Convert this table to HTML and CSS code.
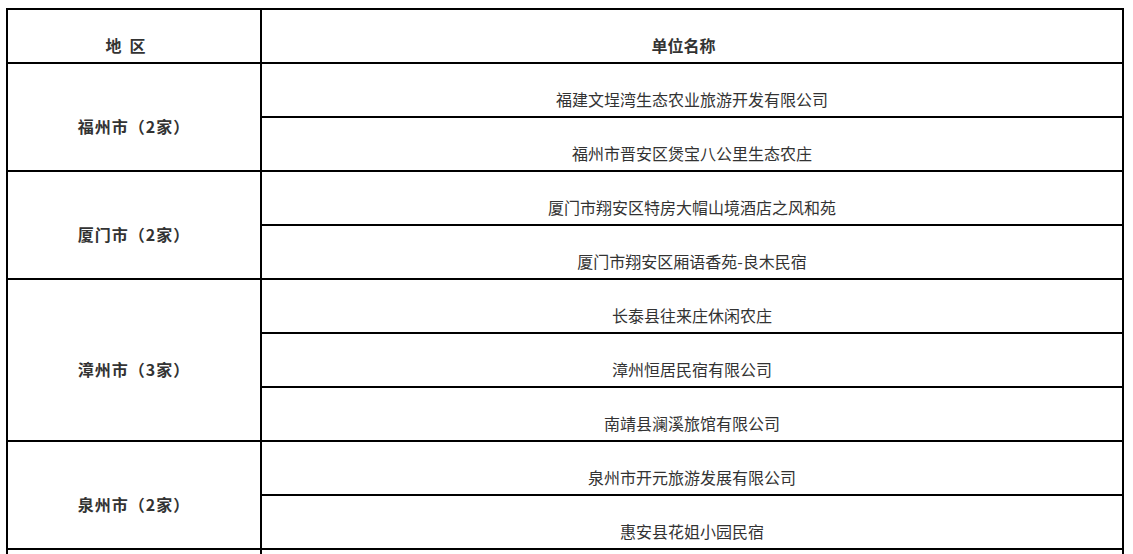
FILE: index.html
```html
<!DOCTYPE html>
<html lang="zh-CN">
<head>
<meta charset="utf-8">
<title>单位名称</title>
<link rel="stylesheet" href="styles.css">
</head>
<body>
<table class="list">
  <colgroup>
    <col class="col-region">
    <col class="col-name">
  </colgroup>
  <thead>
    <tr>
      <th class="head-region">地&ensp;区</th>
      <th class="head-name">单位名称</th>
    </tr>
  </thead>
  <tbody>
    <tr>
      <td class="region" rowspan="2">福州市（2家）</td>
      <td class="name">福建文埕湾生态农业旅游开发有限公司</td>
    </tr>
    <tr>
      <td class="name">福州市晋安区煲宝八公里生态农庄</td>
    </tr>
    <tr>
      <td class="region" rowspan="2">厦门市（2家）</td>
      <td class="name">厦门市翔安区特房大帽山境酒店之风和苑</td>
    </tr>
    <tr>
      <td class="name">厦门市翔安区厢语香苑-良木民宿</td>
    </tr>
    <tr>
      <td class="region" rowspan="3">漳州市（3家）</td>
      <td class="name">长泰县往来庄休闲农庄</td>
    </tr>
    <tr>
      <td class="name">漳州恒居民宿有限公司</td>
    </tr>
    <tr>
      <td class="name">南靖县澜溪旅馆有限公司</td>
    </tr>
    <tr>
      <td class="region" rowspan="2">泉州市（2家）</td>
      <td class="name">泉州市开元旅游发展有限公司</td>
    </tr>
    <tr>
      <td class="name">惠安县花姐小园民宿</td>
    </tr>
    <tr>
      <td class="region"></td>
      <td class="name"></td>
    </tr>
  </tbody>
</table>
</body>
</html>
```
FILE: styles.css
```css
html, body {
  margin: 0;
  padding: 0;
  background: #fff;
}

body {
  padding: 8px 0 0 6px;
  font-family: "Noto Sans CJK SC", "Noto Sans", sans-serif;
  font-size: 16px;
  color: #333;
}

.list {
  border-collapse: separate;
  border-spacing: 0;
  width: 1118px;
  table-layout: fixed;
  border-top: 2px solid #000;
  border-left: 2px solid #000;
}

.col-region {
  width: 254px;
}

.list tr {
  height: 54px;
}

.list th,
.list td {
  border-right: 2px solid #000;
  border-bottom: 2px solid #000;
  padding: 18px 0 0 0;
  vertical-align: middle;
  text-align: center;
  line-height: 20px;
  white-space: nowrap;
}

.list th {
  font-weight: bold;
  padding-right: 17px;
}

.region {
  font-weight: bold;
  padding-right: 42px;
  letter-spacing: 1px;
}

.name {
  font-weight: normal;
}
```
